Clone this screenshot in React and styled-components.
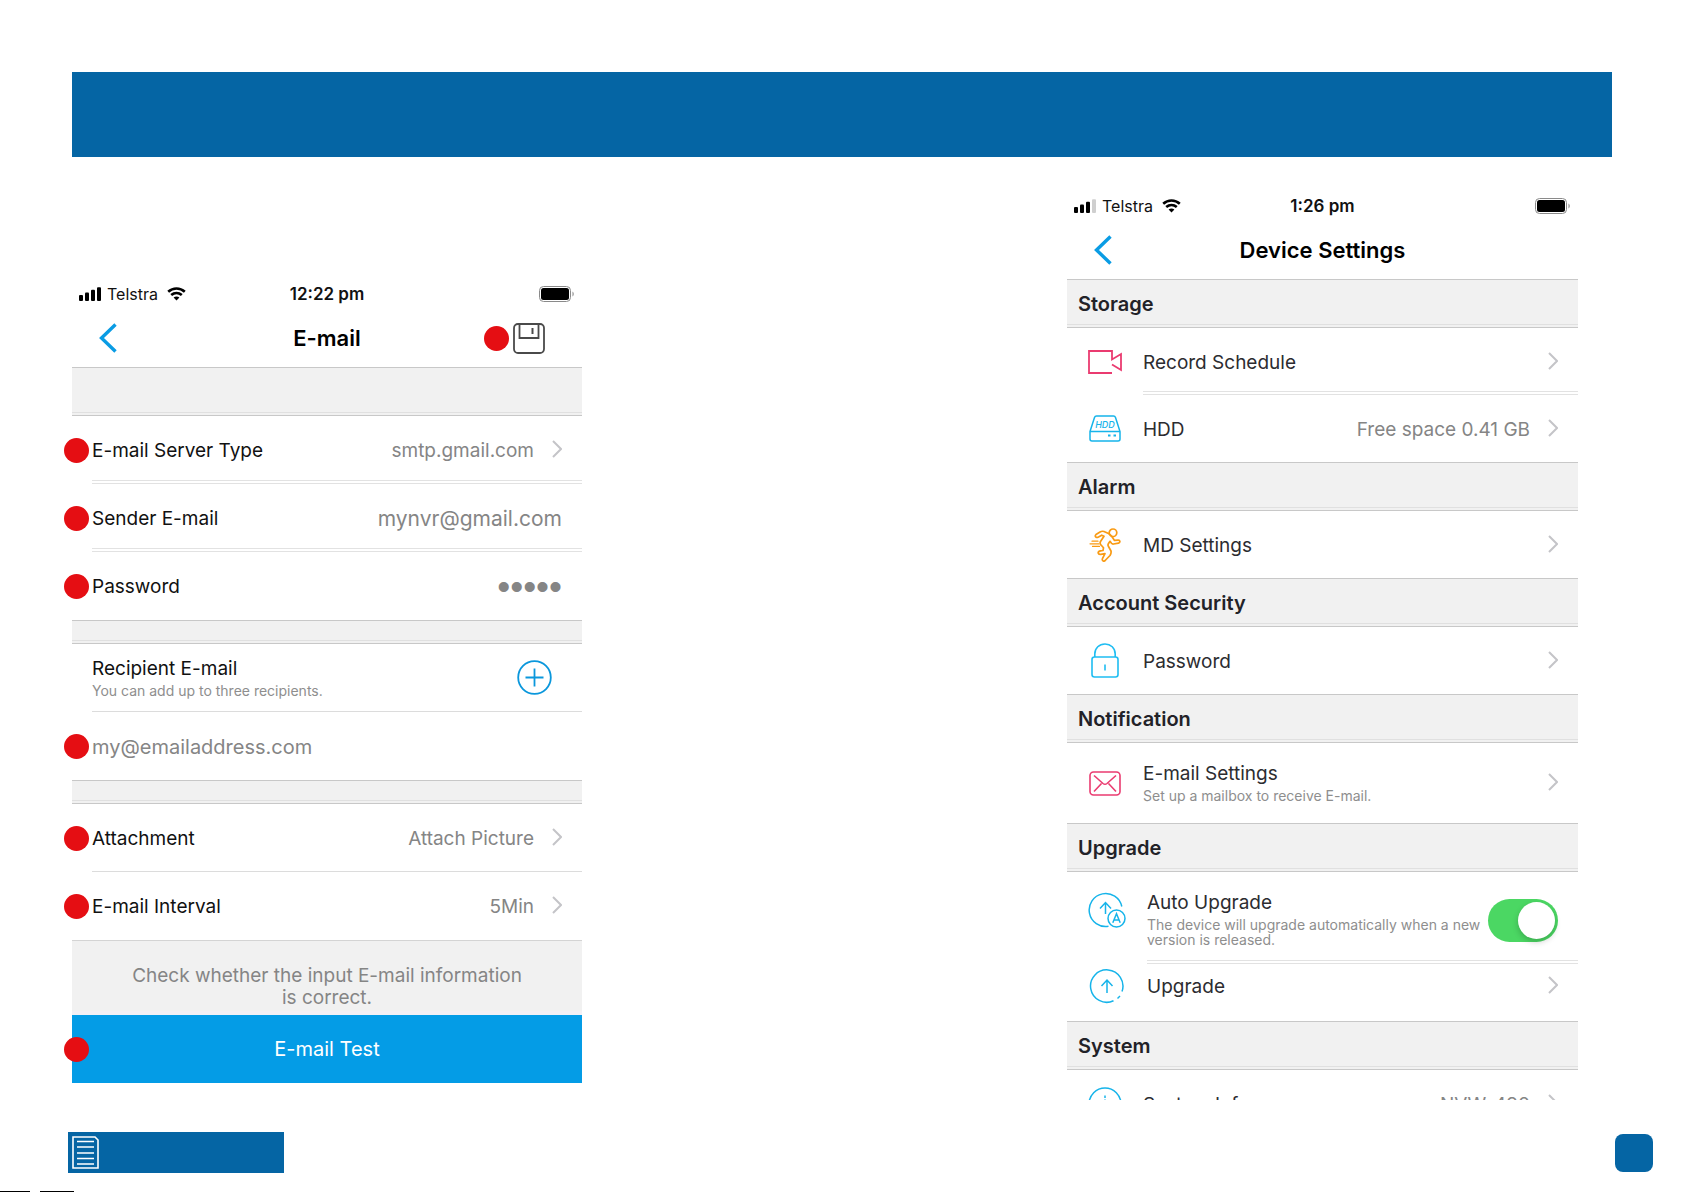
import React, { useState } from 'react'
import styled, { createGlobalStyle } from 'styled-components'

const cyan = '#16b4ea'
const pink = '#ea3b70'
const orange = '#f99b14'

function SignalIcon({ bars }) {
  return (
    <svg width="22" height="14" viewBox="0 0 22 14">
      {[0, 1, 2, 3].map((i) => (
        <rect key={i} x={i * 6} y={8 - i * 2.6} width="4" height={6 + i * 2.6} rx="1" fill={i < bars ? '#000' : '#cfcfcf'} />
      ))}
    </svg>
  )
}

function WifiIcon() {
  return (
    <WifiSvg width="19" height="14" viewBox="0 0 19 14" fill="none" stroke="#000">
      <path d="M1.2 4.8C6 .4 13 .4 17.8 4.8" strokeWidth="2.6" />
      <path d="M4.2 8.1c3.2-2.8 7.4-2.8 10.6 0" strokeWidth="2.6" />
      <path d="M9.5 13.6 6.6 10.6c1.7-1.4 4.1-1.4 5.8 0z" fill="#000" stroke="none" />
    </WifiSvg>
  )
}

function BatteryIcon() {
  return (
    <svg width="36" height="16" viewBox="0 0 36 16">
      <rect x=".5" y=".5" width="31" height="15" rx="4" fill="none" stroke="#8a8a8a" />
      <rect x="2" y="2" width="28" height="12" rx="2.5" fill="#000" />
      <path d="M33.5 5.5c1.6.8 1.6 4.2 0 5z" fill="#8a8a8a" />
    </svg>
  )
}

function BackIcon() {
  return (
    <svg width="18" height="30" viewBox="0 0 18 30" fill="none" stroke="#0a9ce4" strokeWidth="3.4">
      <path d="M16.5 1.5 2.5 15l14 13.5" />
    </svg>
  )
}

function SaveIcon() {
  return (
    <svg width="32" height="31" viewBox="0 0 32 31" fill="none" stroke="#4a4a4a" strokeWidth="1.8">
      <rect x="1" y="1" width="30" height="29" rx="4" />
      <path d="M6.5 1v14h19V1" />
      <path d="M19.5 5v6" strokeWidth="2" />
    </svg>
  )
}

function PlusIcon() {
  return (
    <svg width="35" height="35" viewBox="0 0 35 35" fill="none" stroke="#0a97dc" strokeWidth="1.8">
      <circle cx="17.5" cy="17.5" r="16.3" />
      <path d="M17.5 8.5v18M8.5 17.5h18" />
    </svg>
  )
}

function Chevron() {
  return (
    <ChevronSvg width="10" height="18" viewBox="0 0 10 18" fill="none" stroke="#c4c4c8" strokeWidth="2">
      <path d="M1 1l8 8-8 8" />
    </ChevronSvg>
  )
}

function CameraIcon() {
  return (
    <svg width="34" height="24" viewBox="0 0 34 24" fill="none" stroke={pink} strokeWidth="1.8">
      <path d="M24 23H1V1h23v8.5L33 4v16l-9-5.500" />
    </svg>
  )
}

function HddIcon() {
  return (
    <svg width="32" height="27" viewBox="0 0 32 27" fill="none" stroke={cyan} strokeWidth="1.5">
      <path d="M1 16.500 5.500 2.500Q6 1 7.500 1h17Q26 1 26.500 2.500L31 16.500V24q0 2-2 2H3q-2 0-2-2zM1 16.500h30" />
      <path d="M19 20.500h2.500M24.500 20.500H27" strokeWidth="2" />
      <HddLabel x="16" y="12.500">HDD</HddLabel>
    </svg>
  )
}

function RunnerIcon() {
  return (
    <svg width="32" height="34" viewBox="0 0 32 34" fill="none" stroke={orange} strokeWidth="1.7" strokeLinejoin="round" strokeLinecap="round">
      <circle cx="24" cy="4.800" r="3.800" />
      <path d="M19.500 5.500 15 3.500Q13 2.800 11 4L7 6.500Q5.500 8 7 9.200q1 .6 2.500-.2l3.200-1.800 2.300 1-3.500 5.300q-1 2 .8 3.800l2.200 2.500-.5 2.700-2.500.3q-2.500.4-2.300 2.200.3 1.600 2.500 1.300l4.300-.6q-1.500 3-2.500 4.800-.7 1.700.7 2.500 1.400.6 2.400-1L21 27.500q1.500-2.500 1-4.500l-2.500-4.500q-1-1.500 0-3l1.500-2.200 1.500 2q.8.9 2 .7l5-.8q1.500-.5 1.400-1.800-.2-1.400-1.800-1.300l-3.600.3-2.500-3.700Q21.500 6.500 19.500 5.500z" />
      <path d="M3 13.200h6M1 15.800h9M3.500 18.400h7" strokeWidth="1.200" />
    </svg>
  )
}

function LockIcon() {
  return (
    <svg width="28" height="35" viewBox="0 0 28 35" fill="none" stroke="#1fbdf2" strokeWidth="1.600">
      <path d="M3.800 14V11C3.800 5 8.300 1 14 1s10.200 4 10.200 10v3" />
      <rect x="1" y="14" width="26" height="20" rx="2.500" />
      <path d="M14 21.500v6" />
    </svg>
  )
}

function MailIcon() {
  return (
    <svg width="32" height="25" viewBox="0 0 32 25" fill="none" stroke={pink} strokeWidth="1.600">
      <rect x="1" y="1" width="30" height="23" rx="3.500" />
      <path d="M5 4.500l9 8q2 1.600 4 0l9-8M5 20.500l7.500-8M27 20.500l-7.500-8" />
    </svg>
  )
}

function AutoUpgradeIcon() {
  return (
    <svg width="38" height="36" viewBox="0 0 38 36" fill="none" stroke={cyan} strokeWidth="1.500">
      <path d="M33.800 14.500A16.500 16.500 0 1 0 20.500 34.300" />
      <path d="M17.500 22V10.500M12 16.500l5.500-6 5.500 6" />
      <circle cx="28.500" cy="26.500" r="8.500" />
      <path d="M24.800 30.800l3.700-9 3.700 9M26 28h5" />
    </svg>
  )
}

function UpgradeIcon() {
  return (
    <svg width="36" height="36" viewBox="0 0 36 36" fill="none" stroke={cyan} strokeWidth="1.500">
      <path d="M33 23.500A16.200 16.200 0 1 0 24.500 32.800" />
      <path d="M28.500 30.500l2.500-2.500" />
      <path d="M18 25V12M12.500 18l5.500-6 5.500 6" />
    </svg>
  )
}

function InfoIcon() {
  return (
    <svg width="34" height="34" viewBox="0 0 34 34" fill="none" stroke={cyan} strokeWidth="1.500">
      <circle cx="17" cy="17" r="16" />
      <path d="M17 8.500v2.500M17 12.500v12" />
    </svg>
  )
}

function DocumentIcon() {
  return (
    <svg width="27" height="33" viewBox="0 0 27 33" fill="none" stroke="#fff" strokeWidth="1.600">
      <path d="M1 1h22l3 3v28H1z" />
      <path d="M5 5.500h17M5 11h17M5 17h17M5 22.500h17M5 28h17" />
    </svg>
  )
}

function PhoneHeader({ bars, time, title, children }) {
  return (
    <header>
      <StatusBar>
        <Carrier>
          <SignalIcon bars={bars} />
          Telstra
          <WifiIcon />
        </Carrier>
        <Time>{time}</Time>
        <Battery><BatteryIcon /></Battery>
      </StatusBar>
      <NavBar>
        <BackButton type="button" aria-label="Back"><BackIcon /></BackButton>
        <Title>{title}</Title>
        <NavActions>{children}</NavActions>
      </NavBar>
    </header>
  )
}

function EmailScreen() {
  const [ sender, setSender ] = useState('mynvr@gmail.com')
  const [ password, setPassword ] = useState('admin')
  const [ recipient, setRecipient ] = useState('my@emailaddress.com')

  return (
    <EmailPanel>
      <PhoneHeader bars={4} time="12:22 pm" title="E-mail">
        <InlineDot />
        <IconButton type="button" aria-label="Save"><SaveIcon /></IconButton>
      </PhoneHeader>

      <Band />
      <Field>
        <Dot />
        <FieldBody $line="double">
          <label htmlFor="server">E-mail Server Type</label>
          <ValueSelect id="server" defaultValue="smtp.gmail.com">
            <option>smtp.gmail.com</option>
          </ValueSelect>
          <Chevron />
        </FieldBody>
      </Field>
      <Field>
        <Dot />
        <FieldBody $line="double">
          <label htmlFor="sender">Sender E-mail</label>
          <SenderInput id="sender" value={sender} onChange={(e) => setSender(e.target.value)} />
        </FieldBody>
      </Field>
      <Field>
        <Dot />
        <FieldBody>
          <label htmlFor="password">Password</label>
          <PasswordInput id="password" type="password" value={password} onChange={(e) => setPassword(e.target.value)} />
        </FieldBody>
      </Field>

      <Band $thin />
      <Field>
        <FieldBody $line="solid">
          <Texts>
            <span>Recipient E-mail</span>
            <Hint>You can add up to three recipients.</Hint>
          </Texts>
          <AddButton type="button" aria-label="Add recipient"><PlusIcon /></AddButton>
        </FieldBody>
      </Field>
      <Field>
        <Dot />
        <FieldBody>
          <RecipientInput aria-label="Recipient E-mail" value={recipient} onChange={(e) => setRecipient(e.target.value)} />
        </FieldBody>
      </Field>

      <Band $thin />
      <Field>
        <Dot />
        <FieldBody $line="solid">
          <label htmlFor="attachment">Attachment</label>
          <ValueSelect id="attachment" defaultValue="Attach Picture">
            <option>Attach Picture</option>
          </ValueSelect>
          <Chevron />
        </FieldBody>
      </Field>
      <Field>
        <Dot />
        <FieldBody>
          <label htmlFor="interval">E-mail Interval</label>
          <ValueSelect id="interval" defaultValue="5Min">
            <option>5Min</option>
          </ValueSelect>
          <Chevron />
        </FieldBody>
      </Field>

      <Note>Check whether the input E-mail information<br />is correct.</Note>
      <TestRow>
        <Dot />
        <TestButton type="button">E-mail Test</TestButton>
      </TestRow>
    </EmailPanel>
  )
}

function SettingRow({ icon, label, hint, value, line }) {
  return (
    <SettingLink href="#" $tall={!!hint}>
      <IconBox>{icon}</IconBox>
      <FieldBody $line={line}>
        <Texts>
          <span>{label}</span>
          {hint && <Hint>{hint}</Hint>}
        </Texts>
        {value && <Value>{value}</Value>}
        <Chevron />
      </FieldBody>
    </SettingLink>
  )
}

function DeviceScreen() {
  const [ autoUpgrade, setAutoUpgrade ] = useState(true)

  return (
    <Panel>
      <PhoneHeader bars={3} time="1:26 pm" title="Device Settings" />

      <Band>Storage</Band>
      <SettingRow icon={<CameraIcon />} label="Record Schedule" line="double" />
      <SettingRow icon={<HddIcon />} label="HDD" value="Free space 0.41 GB" />

      <Band>Alarm</Band>
      <SettingRow icon={<RunnerIcon />} label="MD Settings" />

      <Band>Account Security</Band>
      <SettingRow icon={<LockIcon />} label="Password" />

      <Band>Notification</Band>
      <SettingRow icon={<MailIcon />} label="E-mail Settings" hint="Set up a mailbox to receive E-mail." />

      <Band>Upgrade</Band>
      <AutoUpgradeRow>
        <IconBox $wide><AutoUpgradeIcon /></IconBox>
        <AutoUpgradeBody $line="double">
          <Texts>
            <label htmlFor="auto-upgrade">Auto Upgrade</label>
            <Hint>The device will upgrade automatically when a new version is released.</Hint>
          </Texts>
          <Switch
            id="auto-upgrade"
            type="checkbox"
            checked={autoUpgrade}
            onChange={(e) => setAutoUpgrade(e.target.checked)}
          />
        </AutoUpgradeBody>
      </AutoUpgradeRow>
      <UpgradeLink href="#">
        <IconBox $wide><UpgradeIcon /></IconBox>
        <FieldBody>
          <Texts>Upgrade</Texts>
          <Chevron />
        </FieldBody>
      </UpgradeLink>

      <Band>System</Band>
      <CutOff>
        <SettingRow icon={<InfoIcon />} label="System Info" value="NVW-490" />
      </CutOff>
    </Panel>
  )
}

export default function App() {
  return (
    <Page>
      <GlobalStyle />
      <Banner />
      <Columns>
        <EmailScreen />
        <DeviceScreen />
      </Columns>
      <Footer>
        <ContentsLink href="#" aria-label="Contents"><DocumentIcon /></ContentsLink>
        <PageBadge />
      </Footer>
      <PrintMarks>
        <Mark $width={30} />
        <Mark $width={34} />
      </PrintMarks>
    </Page>
  )
}

const GlobalStyle = createGlobalStyle`
  * {
    box-sizing: border-box;
  }

  body {
    margin: 0;
    background: #fff;
    color: #111;
    font-family: Inter, "Liberation Sans", sans-serif;
    font-size: 19px;
    line-height: 24px;
  }

  button, input, select {
    font: inherit;
    color: inherit;
    border: 0;
    padding: 0;
    background: none;
  }

  svg {
    display: block;
    flex: none;
  }
`

const Page = styled.div`
  display: flex;
  flex-direction: column;
  min-height: 100vh;
  padding-top: 72px;
`

const Banner = styled.div`
  height: 85px;
  margin: 0 73px 0 72px;
  background: #0565a4;
`

const Columns = styled.main`
  display: grid;
  grid-template-columns: minmax(360px, 510fr) minmax(24px, 485fr) minmax(360px, 511fr);
  align-items: start;
  margin: 30px 107px 0 72px;
`

const Panel = styled.section`
  grid-column: 3;
  min-width: 0;
`

const EmailPanel = styled(Panel)`
  grid-column: 1;
  margin-top: 88px;
`

const StatusBar = styled.div`
  display: grid;
  grid-template-columns: 1fr auto 1fr;
  align-items: center;
  height: 38px;
  padding: 0 7px;
`

const Carrier = styled.div`
  display: flex;
  align-items: center;
  gap: 6px;
  font-size: 16px;
`

const WifiSvg = styled.svg`
  margin-left: 3px;
`

const Time = styled.time`
  font-size: 17px;
  font-weight: 600;
`

const Battery = styled.div`
  justify-self: end;
`

const NavBar = styled.div`
  display: grid;
  grid-template-columns: 1fr auto 1fr;
  align-items: center;
  height: 54px;
  padding: 0 27px 4px;
`

const BackButton = styled.button`
  justify-self: start;
  cursor: pointer;
`

const Title = styled.h1`
  margin: 0;
  font-size: 22px;
  font-weight: 600;
  color: #000;
`

const NavActions = styled.div`
  display: flex;
  align-items: center;
  justify-content: flex-end;
  gap: 4px;
`

const IconButton = styled.button`
  margin-right: 10px;
  cursor: pointer;
`

const Band = styled.h2`
  display: flex;
  align-items: center;
  height: ${props => props.$thin ? '24px' : '49px'};
  margin: 0;
  padding: 0 11px;
  border: solid #c8c8c8;
  border-width: 1px 0;
  box-shadow: inset 0 -2px #f1f1f1, inset 0 -3px #e0e0e0;
  background: #f1f1f1;
  font-size: 20px;
  font-weight: 600;
  color: #222228;
`

const Field = styled.div`
  position: relative;
  display: flex;
  min-height: 68px;
  padding-left: 20px;
`

const lines = {
  solid: '1px solid #dcdcdc',
  double: '4px double #e2e2e2',
}

const FieldBody = styled.div`
  display: flex;
  flex: 1;
  align-items: center;
  min-width: 0;
  padding-right: 20px;
  padding-top: ${props => props.$line === 'double' ? '6px' : '2px'};
  border-bottom: ${props => lines[props.$line] || '0'};
`

const Dot = styled.span`
  position: absolute;
  left: -8px;
  top: calc(50% - 12px);
  width: 25px;
  height: 25px;
  border-radius: 50%;
  background: #e50e13;
`

const InlineDot = styled.span`
  width: 25px;
  height: 25px;
  border-radius: 50%;
  background: #e50e13;
`

const ValueSelect = styled.select`
  appearance: none;
  flex: 1;
  min-width: 0;
  text-align-last: right;
  color: #858585;
`

const ValueInput = styled.input`
  flex: 1;
  min-width: 0;
  color: #858585;
`

const SenderInput = styled(ValueInput)`
  text-align: right;
  font-size: 21px;
`

const PasswordInput = styled(ValueInput)`
  height: 32px;
  text-align: right;
  font-family: "Liberation Sans", sans-serif;
  font-size: 37px;
`

const RecipientInput = styled(ValueInput)`
  font-size: 20px;
`

const ChevronSvg = styled.svg`
  margin: 0 0 4px 18px;
`

const Texts = styled.div`
  display: flex;
  flex: 1;
  flex-direction: column;
  gap: 2px;
  min-width: 0;
`

const Hint = styled.span`
  margin-bottom: 3px;
  font-size: 14px;
  line-height: 15px;
  color: #8e8e8e;
`

const AddButton = styled.button`
  margin: 0 10px 2px 0;
  cursor: pointer;
`

const Note = styled.p`
  margin: 0;
  padding: 24px 16px 2px;
  border-top: 1px solid #d4d4d4;
  border-bottom: 4px solid #f3f0f5;
  background: #f1f1f1;
  text-align: center;
  line-height: 22px;
  color: #858585;
`

const TestRow = styled.div`
  position: relative;
`

const TestButton = styled.button`
  width: 100%;
  height: 68px;
  background: #049ce6;
  font-size: 20px;
  color: #fff;
  cursor: pointer;
`

const SettingLink = styled.a`
  display: flex;
  min-height: ${props => props.$tall ? '80px' : '67px'};
  padding-left: 18px;
  color: #2c2c30;
  text-decoration: none;
`

const IconBox = styled.span`
  display: flex;
  align-items: center;
  justify-content: center;
  width: ${props => props.$wide ? '44px' : '40px'};
  min-height: 40px;
  margin-right: 18px;
`

const Value = styled.span`
  color: #858585;
`

const AutoUpgradeRow = styled.div`
  display: flex;
  align-items: flex-start;
  min-height: 92px;
  padding-left: 18px;
  color: #2c2c30;

  > span {
    margin-top: 18px;
  }
`

const AutoUpgradeBody = styled(FieldBody)`
  min-height: 92px;
  padding-top: 8px;
`

const Switch = styled.input`
  appearance: none;
  display: flex;
  flex: none;
  width: 70px;
  height: 43px;
  margin: 0;
  padding: 3px;
  border-radius: 22px;
  background: ${props => props.checked ? '#4bd763' : '#ddd'};
  justify-content: ${props => props.checked ? 'flex-end' : 'flex-start'};
  cursor: pointer;

  &::before {
    content: '';
    width: 37px;
    height: 37px;
    border-radius: 50%;
    background: #fff;
    box-shadow: 0 3px 6px rgba(0, 0, 0, .2);
  }
`

const UpgradeLink = styled(SettingLink)`
  min-height: 57px;
  padding-bottom: 14px;
`

// the list scrolls on below the edge of the screen
const CutOff = styled.div`
  height: 30px;
  overflow: hidden;
`

const HddLabel = styled.text`
  fill: ${cyan};
  stroke: none;
  font-size: 9px;
  font-style: italic;
  font-weight: 500;
  text-anchor: middle;
`

const Footer = styled.footer`
  display: flex;
  align-items: center;
  justify-content: space-between;
  margin: 32px 32px 0 68px;
`

const ContentsLink = styled.a`
  display: flex;
  align-items: center;
  width: 216px;
  height: 41px;
  padding-left: 4px;
  background: #0565a4;
`

const PageBadge = styled.div`
  width: 38px;
  height: 38px;
  border-radius: 8px;
  background: #0565a4;
`

const PrintMarks = styled.div`
  display: flex;
  gap: 10px;
  margin-top: auto;
`

const Mark = styled.div`
  width: ${props => props.$width}px;
  height: 1px;
  background: #000;
`
